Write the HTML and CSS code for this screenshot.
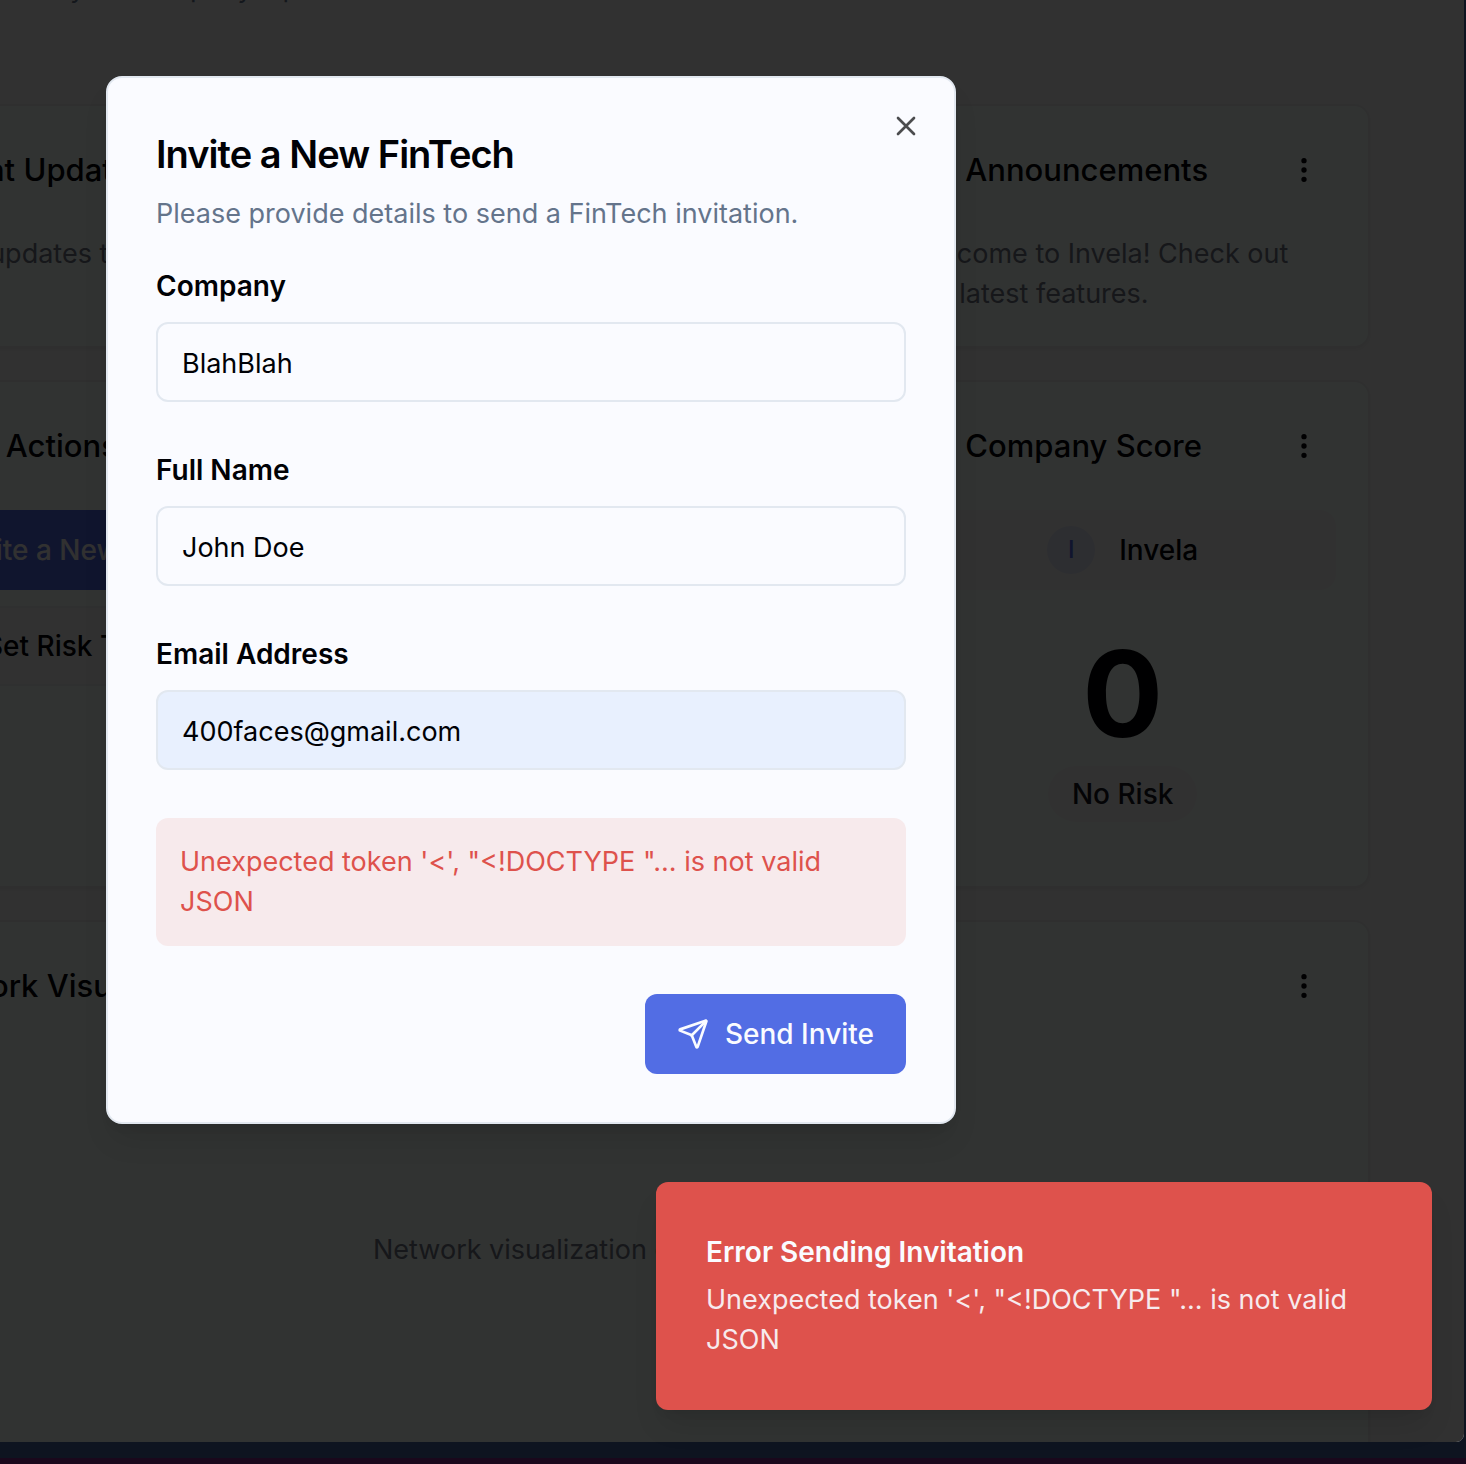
FILE: index.html
```html
<!DOCTYPE html>
<html lang="en">
<head>
<meta charset="utf-8">
<meta name="viewport" content="width=device-width, initial-scale=1">
<title>Invela Dashboard</title>
<link rel="stylesheet" href="styles.css">
</head>
<body>
<svg class="sprite" aria-hidden="true">
  <symbol id="dots" viewBox="0 0 24 24"><circle cx="12" cy="12" r="1"/><circle cx="12" cy="5" r="1"/><circle cx="12" cy="19" r="1"/></symbol>
</svg>
<div class="app">
  <main class="dashboard">
    <p class="intro">Get an overview of your company's performance.</p>
    <div class="grid">
      <section class="card">
        <header class="card-head">
          <svg class="icon head-icon" viewBox="0 0 24 24"><path d="M22 12h-4l-3 9L9 3l-3 9H2"/></svg>
          <h2>Recent Updates</h2>
        </header>
        <p class="muted">No recent updates to display</p>
      </section>
      <section class="card card-last">
        <header class="card-head">
          <svg class="icon head-icon" viewBox="0 0 24 24"><path d="M3 11l18-5v12L3 14z"/></svg>
          <h2>Announcements</h2>
          <button class="menu" type="button" aria-label="Announcements menu"><svg class="dots"><use href="#dots"/></svg></button>
        </header>
        <p class="muted">Welcome to Invela! Check out our latest features.</p>
      </section>
      <section class="card">
        <header class="card-head">
          <svg class="icon head-icon" viewBox="0 0 24 24"><path d="M13 2 3 14h9l-1 8 10-12h-9z"/></svg>
          <h2>Quick Actions</h2>
        </header>
        <div class="actions">
          <button class="action action-primary" type="button"><svg class="icon" viewBox="0 0 24 24"><path d="M5 12h14M12 5v14"/></svg>Invite a New FinTech</button>
          <button class="action" type="button"><svg class="icon" viewBox="0 0 24 24"><circle cx="12" cy="12" r="10"/></svg>Set Risk Tracker</button>
        </div>
      </section>
      <section class="card card-last">
        <header class="card-head">
          <svg class="icon head-icon" viewBox="0 0 24 24"><circle cx="12" cy="12" r="9"/></svg>
          <h2>Company Score</h2>
          <button class="menu" type="button" aria-label="Company score menu"><svg class="dots"><use href="#dots"/></svg></button>
        </header>
        <div class="company"><span class="avatar">I</span><span>Invela</span></div>
        <div class="score"><span class="score-value">0</span><span class="pill">No Risk</span></div>
      </section>
      <section class="card card-wide">
        <header class="card-head">
          <svg class="icon head-icon" viewBox="0 0 24 24"><circle cx="12" cy="12" r="9"/></svg>
          <h2>Network Visualization</h2>
          <button class="menu" type="button" aria-label="Network menu"><svg class="dots"><use href="#dots"/></svg></button>
        </header>
        <p class="muted placeholder">Network visualization coming soon</p>
      </section>
    </div>
  </main>
  <div class="overlay"></div>
</div>

<div class="modal" role="dialog" aria-modal="true" aria-labelledby="modal-title">
  <button class="close" type="button" aria-label="Close"><svg class="icon" viewBox="0 0 24 24"><path d="M18 6 6 18M6 6l12 12"/></svg></button>
  <header class="modal-head">
    <h1 id="modal-title">Invite a New FinTech</h1>
    <p>Please provide details to send a FinTech invitation.</p>
  </header>
  <form class="form">
    <div class="field"><label for="company">Company</label><input id="company" type="text" value="BlahBlah"></div>
    <div class="field"><label for="name">Full Name</label><input id="name" type="text" value="John Doe"></div>
    <div class="field"><label for="email">Email Address</label><input class="autofilled" id="email" type="email" value="400faces@gmail.com"></div>
    <p class="error" role="alert">Unexpected token '&lt;', "&lt;!DOCTYPE "... is not valid JSON</p>
    <button class="send" type="submit">
      <svg class="icon" viewBox="0 0 24 24"><path d="M14.536 21.686a.5.5 0 0 0 .937-.024l6.5-19a.496.496 0 0 0-.635-.635l-19 6.5a.5.5 0 0 0-.024.937l7.93 3.18a2 2 0 0 1 1.112 1.11z"/><path d="m21.854 2.147-10.94 10.939"/></svg>
      Send Invite
    </button>
  </form>
</div>

<div class="toast" role="status">
  <strong>Error Sending Invitation</strong>
  <p>Unexpected token '&lt;', "&lt;!DOCTYPE "... is not valid JSON</p>
</div>
</body>
</html>
```
FILE: styles.css
```css
* { box-sizing: border-box; }

body {
  margin: 0;
  height: 100vh;
  display: flex;
  flex-direction: column;
  padding: 0 2px 16px 0;
  border-bottom: 6px solid #1a081c;
  background: #0e1420;
  color: #000105;
  font: 400 27px/40px Inter, "Liberation Sans", sans-serif;
  overflow: hidden;
}

h1, h2, p { margin: 0; }
button, input { font: inherit; color: inherit; }
button { border: 0; background: none; padding: 0; cursor: pointer; }

.sprite { display: none; }

.icon {
  width: 32px;
  height: 32px;
  flex: none;
  fill: none;
  stroke: currentColor;
  stroke-width: 2;
  stroke-linecap: round;
  stroke-linejoin: round;
}

/* Dashboard behind the dialog, scrolled down and to the right */
.app {
  position: relative;
  flex: 1;
  min-height: 0;
  overflow: hidden;
  border-radius: 0 0 8px 0;
  background: #f5f5f5;
}

.dashboard { margin: -32px 94px 0 -178px; }
.intro { margin-bottom: 96px; color: #64748b; }

.grid {
  display: grid;
  grid-template-columns: repeat(3, 1fr);
  gap: 32px;
}

.card {
  display: flex;
  flex-direction: column;
  gap: 32px;
  padding: 32px;
  border: 2px solid #e8ecec;
  border-radius: 16px;
  background: #f5fffa;
  box-shadow: 0 2px 4px rgba(0, 0, 0, 0.05);
}
.card-last { grid-column: 3; }
.card-wide { grid-column: 1 / -1; }

.card-head {
  display: flex;
  align-items: center;
  gap: 16px;
  height: 64px;
}
.card-head h2 { flex: 1; font-size: 31px; line-height: 42px; font-weight: 500; }
.head-icon { width: 40px; height: 40px; }

.menu {
  display: grid;
  place-items: center;
  width: 64px;
  height: 64px;
}
.dots {
  width: 32px;
  height: 32px;
  fill: currentColor;
  stroke: currentColor;
  stroke-width: 2;
}

.muted { color: #6e7382; }
.placeholder { display: grid; place-items: center; height: 400px; }

.actions { display: flex; flex-direction: column; gap: 16px; }
.action {
  display: flex;
  align-items: center;
  justify-content: center;
  gap: 16px;
  height: 80px;
  border: 2px solid #ebeff0;
  border-radius: 12px;
  background: #f5f5f5;
  font-size: 28px;
  font-weight: 500;
}
.action-primary { border-color: #5269e4; background: #5269e4; color: #f5f5f5; }

.company {
  display: flex;
  align-items: center;
  justify-content: center;
  gap: 24px;
  height: 80px;
  border-radius: 16px;
  background: #f5f5f5;
  font-size: 28px;
  font-weight: 500;
}
.avatar {
  display: grid;
  place-items: center;
  width: 48px;
  height: 48px;
  border-radius: 50%;
  background: #e1e4f2;
  color: #5269e4;
  font-size: 24px;
}

.score {
  display: flex;
  flex-direction: column;
  align-items: center;
  gap: 12px;
  margin-top: -32px;
  padding: 44px 0 32px;
}
.score-value { font-size: 120px; line-height: 120px; font-weight: 700; }
.pill {
  padding: 8px 24px;
  border-radius: 28px;
  background: #f5f5f5;
  color: #14161e;
  font-size: 28px;
  font-weight: 500;
}

.overlay { position: absolute; inset: 0; background: rgba(0, 0, 0, 0.8); }

/* Invitation dialog */
.modal {
  position: absolute;
  top: 76px;
  left: 106px;
  width: 850px;
  max-width: calc(100% - 106px);
  padding: 48px;
  border: 2px solid #e2e8f0;
  border-radius: 16px;
  background: #fafbff;
  box-shadow: 0 20px 30px -6px rgba(0, 0, 0, 0.1), 0 8px 12px -8px rgba(0, 0, 0, 0.1);
}
.close {
  position: absolute;
  top: 32px;
  right: 32px;
  height: 32px;
  color: #4b4c4e;
}
.close .icon { display: block; }

.modal-head { display: flex; flex-direction: column; gap: 12px; margin-bottom: 32px; }
.modal-head h1 { font-size: 38px; line-height: 56px; font-weight: 600; letter-spacing: -0.025em; }
.modal-head p { color: #64748b; }

.form { display: flex; flex-direction: column; gap: 48px; }
.field { display: flex; flex-direction: column; gap: 16px; }
.field label { font-size: 28px; font-weight: 600; }
.field input {
  width: 100%;
  height: 80px;
  padding: 2px 24px 0;
  border: 2px solid #e2e8f0;
  border-radius: 12px;
  background: #fafbff;
}
.field .autofilled { background: #e8f0fe; }

.error {
  padding: 24px;
  border-radius: 12px;
  background: #f7eaec;
  color: #de524c;
}

.send {
  display: flex;
  align-items: center;
  align-self: flex-end;
  gap: 16px;
  height: 80px;
  padding: 0 32px;
  border-radius: 12px;
  background: #526de4;
  color: #fafbff;
  font-size: 28px;
  font-weight: 500;
}

.toast {
  position: absolute;
  right: 34px;
  bottom: 54px;
  width: 776px;
  max-width: calc(100% - 34px);
  padding: 50px;
  border-radius: 12px;
  background: #de524c;
  color: #fafbff;
  box-shadow: 0 20px 30px -6px rgba(0, 0, 0, 0.1), 0 8px 12px -8px rgba(0, 0, 0, 0.1);
}
.toast strong { display: block; margin-bottom: 8px; font-size: 28px; font-weight: 600; }
.toast p { opacity: 0.9; }
```
